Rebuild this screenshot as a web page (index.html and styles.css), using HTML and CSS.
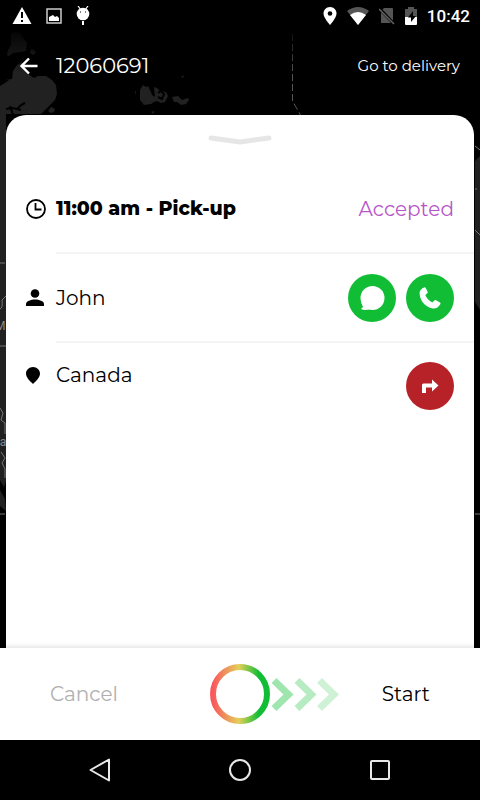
FILE: index.html
```html
<!DOCTYPE html>
<html lang="en">
<head>
<meta charset="utf-8">
<meta name="viewport" content="width=device-width, initial-scale=1">
<title>Order 12060691</title>
<link rel="stylesheet" href="styles.css">
</head>
<body>
<div class="app">
  <svg class="map" viewBox="0 0 480 800" preserveAspectRatio="xMidYMin slice" aria-hidden="true">
    <defs>
      <linearGradient id="fade" x1="0" y1="0" x2="0" y2="1"><stop offset="0" stop-color="#000"/><stop offset="1" stop-color="#000" stop-opacity="0"/></linearGradient>
    </defs>
    <g fill="#212121">
      <path d="M11 34l4-2 5 1 4 6 3 4-1 8-5 1-8 1-4 3-2-1 1-5 3-5zM31 49l3 1 2 3-3 2-3-2z"/>
      <path d="M12 79l1-8 4-6 5-3 4 2 0 8 5 4 3 2 4-2 8 0 6 4 4 5 1 9-2 6-5 5-6 6-3 3H0V86l5-3 4-3-4 0z"/>
      <path d="M51 107l4 2-1 3-3 1-3-2zM140 90l3-5 3 2 2-1 3 6 1 3 3 2-1-10 3 1 3 3 6 1 2 4-3 6-4 1-4-2-3 1-3 2-7 1-4-5zM172 97l6-1 4 4 6-2 1 2-3 4-5 1-4-3-3 0zM181 77l3-2-1 3zM151 112l3-1v3zM135 91l1 0v5z"/>
      <path d="M0 114h6v367l-2 6-4-7zM480 156l-5 5v141l5 8z"/>
      <path d="M0 490l5 9 1 12-6-5z"/>
    </g>
    <g fill="none" stroke="#000" stroke-width="2"><path d="M6 109l6-1 5 1 4-4 4-2M10 106l3 9M17 109l4 1M158 93l3-2 3 3-2 5-4-2"/></g>
    <path d="M292.500 34v67l8 14" fill="none" stroke="#555" stroke-dasharray="7 3"/>
    <g fill="none" stroke="#777"><path d="M0 346h6M0 408l3 5-2 7 4 3v11M1 452l4 6-3 5 3 6v9M0 514h5M475 514h5M0 309q3-1 2-9l4-4M0 263h5M475 146l5 4M475 230l5 5M475 189h2"/></g>
    <text class="map-label" x="-5" y="330">M</text>
    <text class="map-label" x="-7" y="446">na</text>
    <path d="M0 24h480v50H0z" fill="url(#fade)"/>
  </svg>

  <div class="status">
    <div class="status-group notices">
      <svg width="20" height="20" viewBox="0 0 20 20"><path d="M10 1l9.500 17H.500z" fill="#fff"/><path d="M10 6v6M10 14v2" stroke="#000" stroke-width="2"/></svg>
      <svg width="16" height="16" viewBox="0 0 16 16"><path d="M1 1h14v14H1z" fill="none" stroke="#ccc" stroke-width="1.500"/><path d="M3 13V9l4-2 2 2 2-1 2 2v3z" fill="#fff"/></svg>
      <svg width="14" height="20" viewBox="0 0 14 20"><circle cx="7" cy="8" r="6.300" fill="#fff"/><path d="M2 0l3 4M12 0L9 4" stroke="#fff" stroke-width="1.200"/><path d="M7 15v4" stroke="#fff" stroke-width="2"/><path d="M4 6h1M9 6h1" stroke="#000"/></svg>
    </div>
    <div class="status-group signals">
      <svg width="14" height="20" viewBox="0 0 14 20"><path d="M7 1C3 1 .500 4 .500 7.500.500 12 7 19 7 19s6.500-7 6.500-11.500C13.500 4 11 1 7 1z" fill="#fff"/><circle cx="7" cy="7.500" r="2.300"/></svg>
      <svg width="22" height="20" viewBox="0 0 22 20"><path d="M0 5Q11-3 22 5L11 19z" fill="#555"/><path d="M3 9q8-6 16 0l-8 10z" fill="#fff"/></svg>
      <svg width="16" height="20" viewBox="0 0 16 20"><path d="M5 2h8q1 0 1 1v14H2V5z" fill="#555"/><path d="M1 3l14 15" stroke="#000" stroke-width="3"/><path d="M0 3l15 15" stroke="#666" stroke-width="1.500"/></svg>
      <svg width="12" height="20" viewBox="0 0 12 20"><path d="M0 3h3V1h6v2h3v9H0z" fill="#555"/><path d="M0 11h12v7q0 1-1 1H1q-1 0-1-1z" fill="#fff"/><path d="M8 5l-5 6.500h3v4.500l5-6H8z"/></svg>
      <span class="clock">10:42</span>
    </div>
  </div>

  <header class="bar">
    <button class="back" aria-label="Back"><svg width="18" height="18" viewBox="0 0 18 18"><path d="M17.500 9H2M9 1.500L1.500 9 9 16.500" fill="none" stroke="#fff" stroke-width="2.400"/></svg></button>
    <h1 class="order">12060691</h1>
    <a class="go" href="#delivery">Go to delivery</a>
  </header>

  <main class="sheet">
    <button class="handle" aria-label="Collapse"><svg width="64" height="12" viewBox="0 0 64 12"><path d="M3 4l29 4 29-4" fill="none" stroke="#e6e6e6" stroke-width="5" stroke-linecap="round" stroke-linejoin="round"/></svg></button>
    <section class="row">
      <svg class="icon" width="20" height="20" viewBox="0 0 20 20"><g fill="none" stroke="#000" stroke-width="1.800"><circle cx="10" cy="10" r="9"/><path d="M9.500 4v6.500h6"/></g></svg>
      <div class="content">
        <h2 class="time">11:00 am - Pick-up</h2>
        <span class="state">Accepted</span>
      </div>
    </section>
    <section class="row">
      <svg class="icon" width="20" height="20" viewBox="0 0 20 20"><circle cx="9" cy="5.500" r="4.300"/><path d="M0 18V16c0-3 5-4.500 9-4.500s9 1.500 9 4.500v2z"/></svg>
      <div class="content">
        <span class="label">John</span>
        <div class="actions">
          <button class="round" aria-label="Message"><svg width="48" height="48" viewBox="0 0 48 48"><circle cx="24.500" cy="24" r="12" fill="#fff"/><path d="M13 28l2 5-2 2q4 2 9 0z" fill="#fff"/></svg></button>
          <button class="round" aria-label="Call"><svg width="48" height="48" viewBox="0 0 48 48"><path d="M18 13.500q1-.800 1.600.200l2 4q.500 1-.500 1.700l-1.800 1.600q2 5 7 7.500l2-2q.700-.800 1.700-.200l4 2.300q1 .700.300 1.700-2.800 4.700-7.300 4.200C18 33 13.500 25 13.600 19q0-3.500 4.400-5.500z" fill="#fff"/></svg></button>
        </div>
      </div>
    </section>
    <section class="row address">
      <svg class="icon" width="20" height="20" viewBox="0 0 20 20"><path d="M7 2C3 2 0 5 0 8.500 0 12.500 4 16 7 19c3-3 7-6.500 7-10.500C14 5 11 2 7 2z"/></svg>
      <div class="content">
        <span class="label">Canada</span>
        <button class="round route" aria-label="Directions"><svg width="48" height="48" viewBox="0 0 48 48"><path d="M16 31v-8q0-1.500 1.500-1.500H26v-4l6.500 6-6.500 6v-4h-6V31z" fill="#fff"/></svg></button>
      </div>
    </section>
  </main>

  <footer class="controls">
    <button class="choice cancel">Cancel</button>
    <div class="slide">
      <svg width="130" height="60" viewBox="0 0 130 60">
        <defs><linearGradient id="ring"><stop offset="0" stop-color="#f9585d"/><stop offset=".48" stop-color="#e3cf59"/><stop offset=".85" stop-color="#10bd35"/></linearGradient></defs>
        <circle cx="30" cy="30" r="27" fill="#fff" stroke="url(#ring)" stroke-width="6"/>
        <g fill="none" stroke="#10bd35" stroke-width="7"><path d="M64 16.500l14.500 14-14.500 14" opacity=".4"/><path d="M87 16.500l14.500 14-14.500 14" opacity=".3"/><path d="M109.500 16.500l14.500 14-14.500 14" opacity=".2"/></g>
      </svg>
    </div>
    <button class="choice start">Start</button>
  </footer>

  <nav class="system">
    <button aria-label="Back"><svg width="24" height="26" viewBox="0 0 24 26"><path d="M21 2.500v21L2.500 13z" fill="none" stroke="#e8e8e8" stroke-width="2" stroke-linejoin="round"/></svg></button>
    <button aria-label="Home"><svg width="24" height="26" viewBox="0 0 24 26"><circle cx="12" cy="13" r="10" fill="none" stroke="#e8e8e8" stroke-width="2"/></svg></button>
    <button aria-label="Recent apps"><svg width="24" height="26" viewBox="0 0 24 26"><rect x="3" y="4" width="18" height="18" rx="1" fill="none" stroke="#e8e8e8" stroke-width="2"/></svg></button>
  </nav>
</div>
</body>
</html>
```
FILE: styles.css
```css
* { box-sizing: border-box; }
body { margin: 0; background: #000; font-family: Montserrat, Inter, "Liberation Sans", sans-serif; color: #000; }
button { border: 0; padding: 0; background: none; font: inherit; color: inherit; }
svg { display: block; flex: none; }
h1, h2 { margin: 0; }
.app { position: relative; min-height: 100vh; display: flex; flex-direction: column; overflow: hidden; }
.map { position: absolute; inset: 0; width: 100%; height: 100%; }
.map-label { font: 12px Roboto, sans-serif; fill: #888; }
.status, .bar, .sheet, .controls, .system { position: relative; }
.status { display: flex; justify-content: space-between; align-items: center; height: 32px; padding: 0 10px 0 12px; }
.status-group { display: flex; align-items: center; }
.notices { gap: 14px; }
.signals { gap: 10px; }
.clock { font: 500 17px/20px Roboto, sans-serif; color: #fff; }
.bar { display: flex; align-items: center; height: 68px; padding: 0 20px; color: #fff; }
.order { flex: 1; margin-left: 18px; font-size: 21px; line-height: 24px; font-weight: 400; }
.go { color: #fff; font-size: 15px; line-height: 20px; text-decoration: none; }
.sheet { flex: 1; margin: 15px 6px 0; background: #fff; border-radius: 20px 20px 0 0; }
.handle { display: block; margin: 0 auto; padding: 19px 0; }
.row { display: flex; align-items: stretch; padding-left: 20px; }
.icon { margin: 34px 10px 0 0; }
.content { flex: 1; display: flex; align-items: center; justify-content: space-between; min-height: 89px; padding-right: 20px; border-bottom: 2px solid #f4f4f4; }
.time { font-size: 19px; line-height: 24px; font-weight: 800; }
.state { color: #b655c8; font-size: 20px; line-height: 24px; }
.label { font-size: 20px; line-height: 24px; }
.actions { display: flex; gap: 10px; }
.round { width: 48px; height: 48px; border-radius: 50%; background: #10bd35; }
.round.route { background: #b72228; }
.address .content { align-items: flex-start; padding-top: 19px; border: 0; }
.address .label { margin-top: 1px; }
.address .icon { margin-top: 22px; }
.controls { display: grid; grid-template-columns: 1fr 60px 1fr; align-items: center; height: 92px; background: #fff; box-shadow: 0 -2px 4px rgba(0, 0, 0, .1); }
.choice { font-size: 20px; line-height: 24px; }
.cancel { color: #b0b0b0; justify-self: start; margin-left: 50px; }
.start { justify-self: end; margin-right: 50px; }
.slide { width: 130px; }
.system { display: flex; justify-content: center; align-items: center; gap: 116px; height: 60px; background: #000; }
```
